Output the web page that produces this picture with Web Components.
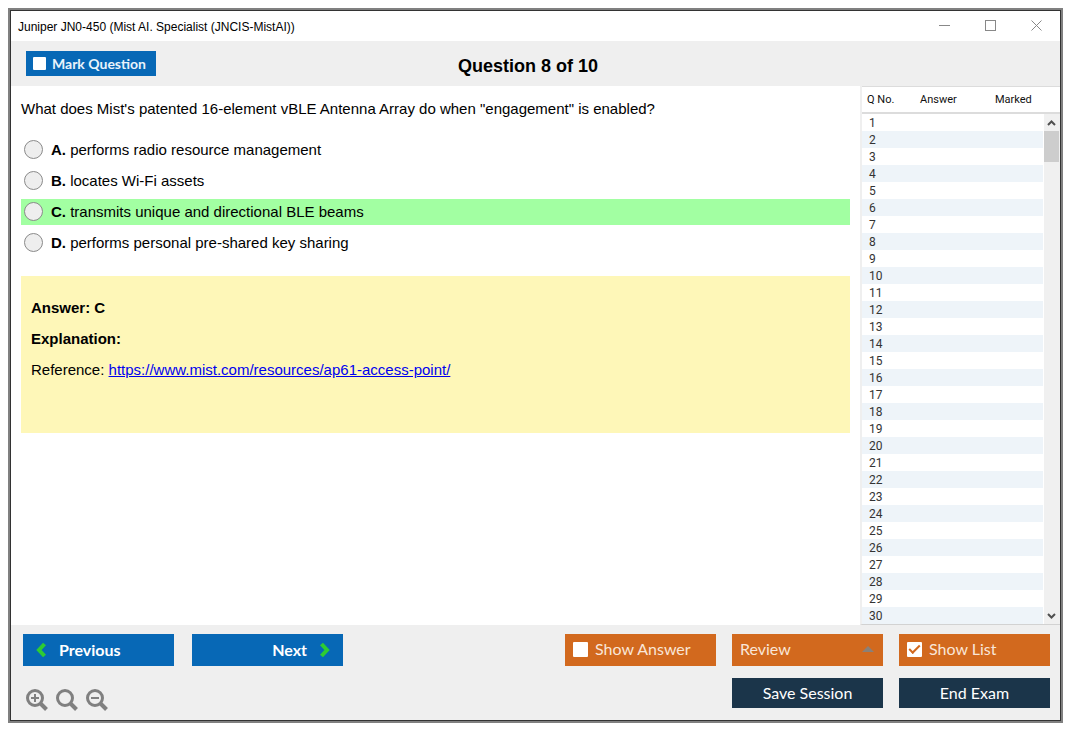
<!DOCTYPE html>
<html lang="en">
<head>
<meta charset="utf-8">
<meta name="viewport" content="width=device-width, initial-scale=1">
<title>Juniper JN0-450 (Mist AI. Specialist (JNCIS-MistAI))</title>
<style>
  :root {
    --blue: #0768b6;
    --orange: #d2691e;
    --navy: #1b354a;
    --chrome: #efefef;
    --font-ui: Lato, "Open Sans", sans-serif;
    --font-text: "Liberation Sans", Arial, sans-serif;
  }
  *, *::before, *::after { box-sizing: border-box; }
  body {
    margin: 0;
    min-height: 100vh;
    padding: 8px 12px 12px 8px;
    display: flex;
    background: #fff;
    color: #000;
    font: 15px/17px var(--font-text);
  }
</style>
</head>
<body>

<exam-window caption="Juniper JN0-450 (Mist AI. Specialist (JNCIS-MistAI))">
  <exam-header slot="header" heading="Question 8 of 10">
    <check-button variant="mark">Mark Question</check-button>
  </exam-header>

  <exam-question>
    <span slot="text">What does Mist's patented 16-element vBLE Antenna Array do when "engagement" is enabled?</span>
    <exam-option letter="A">performs radio resource management</exam-option>
    <exam-option letter="B">locates Wi-Fi assets</exam-option>
    <exam-option letter="C" correct>transmits unique and directional BLE beams</exam-option>
    <exam-option letter="D">performs personal pre-shared key sharing</exam-option>
    <exam-answer slot="answer" answer="C" href="https://www.mist.com/resources/ap61-access-point/"></exam-answer>
  </exam-question>

  <question-list slot="side" count="30"></question-list>

  <exam-footer slot="footer">
    <push-button slot="nav" variant="prev">Previous</push-button>
    <push-button slot="nav" variant="next">Next</push-button>
    <zoom-tools slot="tools"></zoom-tools>
    <check-button class="show-answer">Show Answer</check-button>
    <push-button variant="menu">Review</push-button>
    <check-button class="show-list" checked>Show List</check-button>
    <push-button class="save" variant="dark">Save Session</push-button>
    <push-button variant="dark">End Exam</push-button>
  </exam-footer>
</exam-window>

<script>
(function () {
  'use strict';

  const RESET = '*, *::before, *::after { box-sizing: border-box; }';

  // Base class: clones the element's template into an open shadow root
  class Base extends HTMLElement {
    constructor() {
      super();
      const tpl = document.createElement('template');
      tpl.innerHTML = '<style>' + RESET + '</style>' + this.constructor.markup;
      this.attachShadow({ mode: 'open' }).appendChild(tpl.content.cloneNode(true));
    }
    $(selector) { return this.shadowRoot.querySelector(selector); }
  }

  /* Window frame: title bar, header, body with side panel, footer */
  class ExamWindow extends Base {
    static markup = `
      <style>
        :host {
          flex: 1;
          min-width: 0;
          display: flex;
          flex-direction: column;
          border: 2px solid #808080;
        }
        .frame { flex: 1; display: flex; flex-direction: column; border: 1px solid #333; }
        .titlebar {
          height: 30px;
          display: flex;
          align-items: center;
          justify-content: space-between;
          padding-left: 7px;
          font-size: 12px;
        }
        .caption { padding-top: 2px; }
        .controls { display: flex; align-self: stretch; }
        .controls button {
          width: 46px;
          padding: 0 1px 2px 0;
          border: 0;
          background: none;
          display: grid;
          place-items: center;
        }
        .controls button:hover { background: #e5e5e5; }
        .controls svg { fill: none; stroke: #888; }
        .body { flex: 1; display: flex; }
        .main { flex: 1; min-width: 0; }
      </style>
      <div class="frame">
        <div class="titlebar">
          <span class="caption"></span>
          <div class="controls">
            <button type="button" aria-label="Minimize"><svg width="11" height="11"><path d="M0 5.5H11"/></svg></button>
            <button type="button" aria-label="Maximize"><svg width="11" height="11"><rect x=".5" y=".5" width="10" height="10"/></svg></button>
            <button type="button" aria-label="Close"><svg width="11" height="11"><path d="M.5 .5L10.5 10.5M10.5 .5L.5 10.5"/></svg></button>
          </div>
        </div>
        <slot name="header"></slot>
        <div class="body">
          <main class="main"><slot></slot></main>
          <slot name="side"></slot>
        </div>
        <slot name="footer"></slot>
      </div>`;

    connectedCallback() {
      this.$('.caption').textContent = this.getAttribute('caption') || '';
      this.addEventListener('change', (e) => {
        if (e.target.matches('.show-list')) {
          this.querySelector('question-list').hidden = !e.target.checked;
        }
      });
    }
  }

  class ExamHeader extends Base {
    static markup = `
      <style>
        :host {
          height: 45px;
          display: grid;
          grid-template-columns: 1fr auto 1fr;
          align-items: center;
          padding: 0 30px 0 15px;
          background: var(--chrome);
        }
        h1 { margin: 0; font-size: 18px; line-height: 22px; padding-top: 4px; }
      </style>
      <div><slot></slot></div>
      <h1></h1>`;

    connectedCallback() { this.$('h1').textContent = this.getAttribute('heading'); }
  }

  /* Button-shaped tick box */
  class CheckButton extends Base {
    static markup = `
      <style>
        :host { display: block; }
        label {
          height: 32px;
          display: flex;
          align-items: center;
          gap: 7px;
          padding: 0 8px 2px;
          background: var(--orange);
          color: #f9e6d8;
          font: 16px/20px var(--font-ui);
          cursor: pointer;
        }
        input {
          appearance: none;
          width: 15px;
          height: 15px;
          margin: 0;
          display: grid;
          place-items: center;
          background: #fff;
          border-radius: 1px;
        }
        input:checked::before {
          content: "";
          width: 11px;
          height: 6px;
          margin-top: -3px;
          border: solid var(--orange);
          border-width: 0 0 2px 2px;
          transform: rotate(-45deg);
        }
        :host([variant=mark]) label {
          width: 130px;
          height: 25px;
          gap: 6px;
          padding: 0 7px;
          background: var(--blue);
          color: #e9f3fb;
          font-size: 14px;
          font-weight: 700;
        }
        :host([variant=mark]) input { width: 13px; height: 13px; }
      </style>
      <label><input type="checkbox"><span><slot></slot></span></label>`;

    get checked() { return this.$('input').checked; }

    connectedCallback() {
      const input = this.$('input');
      input.checked = this.hasAttribute('checked');
      input.addEventListener('change', () => {
        this.dispatchEvent(new Event('change', { bubbles: true }));
      });
    }
  }

  class PushButton extends Base {
    static markup = `
      <style>
        :host { display: block; }
        button {
          width: 100%;
          height: 32px;
          display: flex;
          align-items: center;
          border: 0;
          padding: 0 8px 2px;
          color: #fff;
          font: 16px/20px var(--font-ui);
          cursor: pointer;
        }
        svg { display: none; flex: none; }
        :host([variant=prev]) button, :host([variant=next]) button {
          gap: 12px;
          padding: 0 12px;
          background: var(--blue);
          font-weight: 700;
        }
        :host([variant=next]) button { justify-content: flex-end; }
        :host([variant=prev]) .prev, :host([variant=next]) .next, :host([variant=menu]) .up { display: block; }
        :host([variant=menu]) button { justify-content: space-between; background: var(--orange); color: #f9e6d8; }
        :host([variant=dark]) button { height: 30px; padding-bottom: 0; justify-content: center; background: var(--navy); }
        .chevron { fill: none; stroke: #2ecc32; stroke-width: 4; }
        .up { fill: #8a8078; }
      </style>
      <button type="button">
        <svg class="prev chevron" width="12" height="16"><path d="M9.5 2L4 8L9.5 14"/></svg>
        <span><slot></slot></span>
        <svg class="next chevron" width="12" height="16"><path d="M2.5 2L8 8L2.5 14"/></svg>
        <svg class="up" width="14" height="6"><path d="M1 6L7 0L13 6Z"/></svg>
      </button>`;

    connectedCallback() {
      if (this.getAttribute('variant') === 'menu') this.$('button').setAttribute('aria-haspopup', 'menu');
    }
  }

  class ExamQuestion extends Base {
    static markup = `
      <style>
        :host { display: block; padding: 14px 10px; }
        p { margin: 0 0 20px; }
        .options { display: grid; gap: 5px; margin-bottom: 20px; }
      </style>
      <p><slot name="text"></slot></p>
      <div class="options" role="radiogroup"><slot></slot></div>
      <slot name="answer"></slot>`;

    connectedCallback() {
      // Each radio has a shadow root of its own, so exclusivity is kept here
      this.addEventListener('pick', (e) => {
        this.querySelectorAll('exam-option').forEach((o) => {
          if (o !== e.target) o.$('input').checked = false;
        });
      });
    }
  }

  class ExamOption extends Base {
    static markup = `
      <style>
        :host { display: block; }
        :host([correct]) { background: #a2ffa2; }
        label { min-height: 26px; display: flex; align-items: center; gap: 8px; padding: 0 0 2px 3px; }
        input {
          appearance: none;
          width: 19px;
          height: 19px;
          flex: none;
          margin: 0;
          display: grid;
          place-items: center;
          border: 1px solid #8a8a8a;
          border-radius: 50%;
          background: #eee;
        }
        input:checked::before { content: ""; width: 9px; height: 9px; border-radius: 50%; background: #333; }
      </style>
      <label><input type="radio"><span><b></b> <slot></slot></span></label>`;

    connectedCallback() {
      this.$('b').textContent = this.getAttribute('letter') + '.';
      this.$('input').addEventListener('change', () => {
        this.dispatchEvent(new Event('pick', { bubbles: true }));
      });
    }
  }

  class ExamAnswer extends Base {
    static markup = `
      <style>
        :host { display: block; padding: 23px 10px 55px; background: #fef7b8; }
        p { margin: 0; }
        p + p { margin-top: 14px; }
        a { color: #00e; }
      </style>
      <p><b class="answer"></b></p>
      <p><b>Explanation:</b></p>
      <p>Reference: <a></a></p>`;

    connectedCallback() {
      const link = this.$('a');
      this.$('.answer').textContent = 'Answer: ' + this.getAttribute('answer');
      link.href = link.textContent = this.getAttribute('href');
    }
  }

  /* Question table with its scroll bar */
  class QuestionList extends Base {
    static markup = `
      <style>
        :host {
          position: relative;
          flex: 0 0 200px;
          border-left: 2px solid var(--chrome);
          border-bottom: 1px solid #d2d2d2;
          color: #333;
          font: 12px/15px Roboto, sans-serif;
        }
        :host([hidden]) { display: none; }
        table { width: 100%; border-collapse: separate; border-spacing: 0; table-layout: fixed; }
        th {
          height: 28px;
          padding: 0;
          border-top: 1px solid #dcdcdc;
          border-bottom: 2px solid #dcdcdc;
          color: #111;
          font-size: 11px;
          font-weight: 400;
          text-align: left;
        }
        th:first-child { width: 58px; padding-left: 5px; }
        th:nth-child(2) { width: 75px; }
        td { height: 17px; padding: 2px 0 0; }
        td:first-child { padding-left: 7px; }
        tr:nth-child(even) td { background: #eef4f9; }
        .bar {
          position: absolute;
          top: 28px;
          right: 0;
          bottom: 0;
          width: 17px;
          display: flex;
          flex-direction: column;
          border-left: 1px solid #fff;
          background: #f0f0f0;
        }
        .bar button { height: 17px; padding: 0 1px 0 0; border: 0; background: none; display: grid; place-items: center; }
        .bar svg { fill: none; stroke: #505050; stroke-width: 2; }
        .track { flex: 1; }
        .thumb { height: 31px; margin-right: 1px; background: #cdcdcd; }
      </style>
      <table>
        <thead><tr><th>Q No.</th><th>Answer</th><th>Marked</th></tr></thead>
        <tbody></tbody>
      </table>
      <div class="bar">
        <button type="button" aria-label="Scroll up"><svg width="9" height="8"><path d="M1 6L4.500 2.500L8 6"/></svg></button>
        <div class="track"><div class="thumb"></div></div>
        <button type="button" aria-label="Scroll down"><svg width="9" height="8"><path d="M1 2L4.500 5.500L8 2"/></svg></button>
      </div>`;

    connectedCallback() {
      const count = Number(this.getAttribute('count')) || 0;
      let rows = '';
      for (let i = 1; i <= count; i++) rows += '<tr><td>' + i + '</td><td></td><td></td></tr>';
      this.$('tbody').innerHTML = rows;
    }
  }

  class ZoomTools extends Base {
    static markup = `
      <style>
        :host { display: flex; gap: 8px; }
        button { width: 22px; height: 22px; padding: 0; border: 0; background: none; cursor: pointer; }
        svg { display: block; fill: none; stroke: #808080; }
        .lens { stroke-width: 3; }
        .handle { stroke-width: 4; }
        .sign { stroke-width: 2; }
      </style>
      <button type="button" aria-label="Zoom in"><svg width="22" height="22"><circle class="lens" cx="9" cy="9" r="7.500"/><path class="handle" d="M14 14L20.500 20.500"/><path class="sign" d="M5 9H13M9 5V13"/></svg></button>
      <button type="button" aria-label="Reset zoom"><svg width="22" height="22"><circle class="lens" cx="9" cy="9" r="7.500"/><path class="handle" d="M14 14L20.500 20.500"/></svg></button>
      <button type="button" aria-label="Zoom out"><svg width="22" height="22"><circle class="lens" cx="9" cy="9" r="7.500"/><path class="handle" d="M14 14L20.500 20.500"/><path class="sign" d="M5 9H13"/></svg></button>`;
  }

  class ExamFooter extends Base {
    static markup = `
      <style>
        :host {
          display: flex;
          justify-content: space-between;
          align-items: flex-start;
          padding: 9px 10px 9px 12px;
          background: var(--chrome);
        }
        .nav { display: grid; grid-template-columns: 151px 151px; gap: 18px; }
        .tools { padding: 23px 0 0 3px; }
        .actions { display: grid; grid-template-columns: repeat(3, 151px); gap: 12px 16px; }
        ::slotted(.save) { grid-column: 2; }
      </style>
      <div>
        <div class="nav"><slot name="nav"></slot></div>
        <div class="tools"><slot name="tools"></slot></div>
      </div>
      <div class="actions"><slot></slot></div>`;
  }

  customElements.define('exam-window', ExamWindow);
  customElements.define('exam-header', ExamHeader);
  customElements.define('check-button', CheckButton);
  customElements.define('push-button', PushButton);
  customElements.define('exam-question', ExamQuestion);
  customElements.define('exam-option', ExamOption);
  customElements.define('exam-answer', ExamAnswer);
  customElements.define('question-list', QuestionList);
  customElements.define('zoom-tools', ZoomTools);
  customElements.define('exam-footer', ExamFooter);
})();
</script>
</body>
</html>
